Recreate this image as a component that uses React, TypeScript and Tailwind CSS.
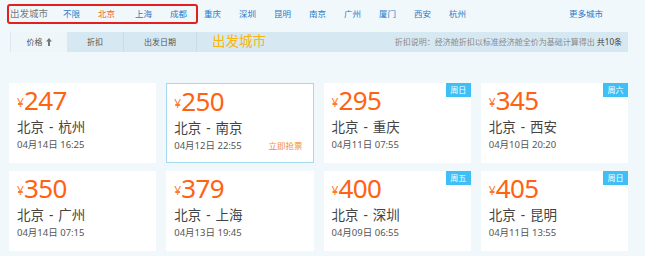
import React from "react";

const font = { fontFamily: '"Noto Sans", "Noto Sans CJK SC", sans-serif' };

type Card = { price: string; from: string; to: string; date: string; badge?: string; hover?: boolean };

const cards: Card[] = [
  { price: "247", from: "北京", to: "杭州", date: "04月14日 16:25" },
  { price: "250", from: "北京", to: "南京", date: "04月12日 22:55", hover: true },
  { price: "295", from: "北京", to: "重庆", date: "04月11日 07:55", badge: "周日" },
  { price: "345", from: "北京", to: "西安", date: "04月10日 20:20", badge: "周六" },
  { price: "350", from: "北京", to: "广州", date: "04月14日 07:15" },
  { price: "379", from: "北京", to: "上海", date: "04月13日 19:45" },
  { price: "400", from: "北京", to: "深圳", date: "04月09日 06:55", badge: "周五" },
  { price: "405", from: "北京", to: "昆明", date: "04月11日 13:55", badge: "周日" },
];

const outside = ["重庆", "深圳", "昆明", "南京", "广州", "厦门", "西安", "杭州"];

function CardView({ c }: { c: Card }) {
  return (
    <div
      className={`relative h-[80px] bg-white ${
        c.hover ? "border border-[#a6d8f0] pl-[7px]" : "pl-[8px]"
      }`}
    >
      {c.badge && (
        <div className="absolute right-0 top-0 flex h-[14px] w-[25px] items-center justify-center bg-[#3ec0f6] text-[8px] leading-none text-white">
          {c.badge}
        </div>
      )}
      <div className={`flex h-[28px] items-end text-[#ff6211] ${c.hover ? "pt-[5px]" : "pt-[6px]"}`}>
        <span className="mb-[2px] text-[12px] leading-none text-[#ff7a2e]">¥</span>
        <span className="text-[26px] leading-[22px] tracking-[-0.5px]">{c.price}</span>
      </div>
      <div className="mt-[8px] flex items-center whitespace-nowrap text-[13.5px] leading-[16px] text-[#444]">
        <span>{c.from}</span>
        <span className="mx-[5px]">-</span>
        <span>{c.to}</span>
      </div>
      <div className="mt-[4px] flex items-center justify-between whitespace-nowrap pr-[10px] text-[9.5px] leading-[12px] text-[#555]">
        <span>{c.date}</span>
        {c.hover && <span className="text-[8.5px] text-[#f28a3a]">立即抢票</span>}
      </div>
    </div>
  );
}

export default function App() {
  return (
    <div className="h-[256px] w-[645px] overflow-hidden bg-[#f0f8fc]" style={font}>
      <div className="w-[628px] pl-[7px]">
        {/* top city row */}
        <div className="flex h-[28px] items-start whitespace-nowrap pt-[4px] text-[8.5px] text-[#2a79c8]">
          <div className="flex h-[20px] items-center rounded-[3px] border-2 border-[#e3201e] pl-[1px] pr-[8px]">
            <span className="w-[53px] text-[9.5px] text-[#7a7a7a]">出发城市</span>
            <span className="w-[35px]">不限</span>
            <span className="w-[37px] text-[#f0601e]">北京</span>
            <span className="w-[35px]">上海</span>
            <span className="w-[18px]">成都</span>
          </div>
          <div className="ml-[6px] flex h-[20px] items-center">
            {outside.map((c) => (
              <span key={c} className="w-[35px]">
                {c}
              </span>
            ))}
            <span className="ml-[85px]">更多城市</span>
          </div>
        </div>
        {/* tab row */}
        <div className="ml-[3px] mt-[4px] flex h-[20px] items-center whitespace-nowrap bg-[#d6e8f2] text-[8px] text-[#555]">
          <div className="flex h-full w-[57px] items-center justify-center gap-[3px] border-l border-[#dde9f0] bg-[#eef6fa]">
            <span>价格</span>
            <svg width="6" height="8" viewBox="0 0 6 8">
              <path d="M3 0 L6 3.5 H4 V8 H2 V3.5 H0 Z" fill="#777" />
            </svg>
          </div>
          <div className="flex h-full w-[57px] items-center justify-center border-r border-[#c9dde8]">折扣</div>
          <div className="flex h-full w-[73px] items-center justify-center border-r border-[#c9dde8]">出发日期</div>
          <div className="ml-[15px] text-[13.5px] leading-none text-[#f6b60c]">出发城市</div>
          <div className="ml-auto pr-[6px] text-[8px] text-[#8a8a8a]">
            折扣说明：经济舱折扣以标准经济舱全价为基础计算得出 <span className="text-[#444]">共10条</span>
          </div>
        </div>
        {/* cards */}
        <div className="ml-[2px] mt-[31px] grid grid-cols-4 gap-x-[10px] gap-y-[8px]">
          {cards.map((c) => (
            <CardView key={c.price} c={c} />
          ))}
        </div>
      </div>
    </div>
  );
}
